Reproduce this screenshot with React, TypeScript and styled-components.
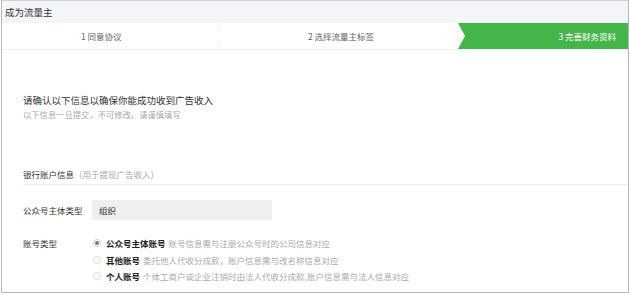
import React from 'react';
import styled, { createGlobalStyle } from 'styled-components';

const GlobalStyle = createGlobalStyle`
  body {
    margin: 0;
    background: #fff;
    font-family: "Noto Sans CJK SC", "Noto Sans", sans-serif;
  }
`;

const Frame = styled.div`
  box-sizing: border-box;
  width: 628px;
  height: 293px;
  margin-left: 1px;
  border: 1px solid #b8b8b8;
  border-top-color: #d0d0d0;
  background: #fff;
  overflow: hidden;
`;

const Header = styled.div`
  height: 22px;
  background: #f4f5f9;
  display: flex;
  align-items: center;
  padding-left: 3px;
  font-size: 9.5px;
  color: #333;
`;

const Steps = styled.div`
  display: flex;
  height: 26px;
  border-bottom: 1px solid #f0f0f0;
`;

const Step = styled.div<{ $w: number; $active?: boolean; $pad: number }>`
  position: relative;
  width: ${p => p.$w}px;
  flex: ${p => (p.$active ? '1' : 'none')};
  display: flex;
  align-items: center;
  justify-content: ${p => (p.$active ? 'flex-end' : 'flex-start')};
  padding: 0 ${p => (p.$active ? p.$pad : 0)}px 0 ${p => (p.$active ? 0 : p.$pad)}px;
  box-sizing: border-box;
  font-size: 8.5px;
  color: ${p => (p.$active ? '#fff' : '#666')};
  background: ${p => (p.$active ? '#44b549' : '#fff')};
  clip-path: ${p =>
    p.$active ? 'polygon(0 0, 100% 0, 100% 100%, 0 100%, 7px 50%)' : 'none'};
`;

const Chevron = styled.svg`
  position: absolute;
  right: -4px;
  top: 0;
`;

const Content = styled.div`
  padding: 43px 0 0 21px;
`;

const Title = styled.div`
  font-size: 9.5px;
  line-height: 14px;
  color: #333;
`;

const Sub = styled.div`
  font-size: 8.3px;
  line-height: 14px;
  color: #aaa;
`;

const Section = styled.div`
  margin-top: 46px;
  padding-bottom: 3px;
  border-bottom: 1px solid #eee;
  font-size: 8.5px;
  line-height: 14px;
  color: #333;
`;

const Hint = styled.span`
  color: #aaa;
`;

const Row = styled.div<{ $top: number; $align?: string }>`
  display: flex;
  align-items: ${p => p.$align || 'center'};
  margin-top: ${p => p.$top}px;
`;

const Label = styled.div`
  width: 69px;
  flex: none;
  font-size: 8.5px;
  line-height: 14px;
  color: #333;
`;

const ReadonlyInput = styled.div`
  width: 180px;
  height: 20px;
  background: #efefef;
  display: flex;
  align-items: center;
  padding-left: 7px;
  box-sizing: border-box;
  font-size: 8.5px;
  color: #333;
`;

const Options = styled.div`
  display: flex;
  flex-direction: column;
  gap: 2.5px;
  padding-left: 1px;
`;

const Option = styled.div`
  display: flex;
  align-items: center;
  height: 14px;
  font-size: 8.5px;
  color: #aaa;
  white-space: nowrap;
`;

const Radio = styled.span<{ $checked?: boolean }>`
  width: 8px;
  height: 8px;
  box-sizing: border-box;
  border-radius: 50%;
  border: 1px solid ${p => (p.$checked ? '#ccc' : '#ddd')};
  margin-right: 5px;
  display: flex;
  align-items: center;
  justify-content: center;
  &::after {
    content: '';
    width: 4px;
    height: 4px;
    border-radius: 50%;
    background: ${p => (p.$checked ? '#777' : 'transparent')};
  }
`;

const Strong = styled.span`
  color: #222;
  font-weight: bold;
  margin-right: 3px;
`;

const options = [
  { name: '公众号主体账号', desc: '账号信息需与注册公众号时的公司信息对应', checked: true },
  { name: '其他账号', desc: '委托他人代收分成款，账户信息需与改名称信息对应' },
  { name: '个人账号', desc: '个体工商户或企业注销时由法人代收分成款,账户信息需与法人信息对应' },
];

export default function App() {
  return (
    <>
      <GlobalStyle />
      <Frame>
        <Header>成为流量主</Header>
        <Steps>
          <Step $w={219} $pad={79}>
            1 同意协议
            <Chevron width="8" height="26" viewBox="0 0 8 26">
              <polyline points="1,0 7,13 1,26" fill="none" stroke="#ededed" strokeWidth="1" />
            </Chevron>
          </Step>
          <Step $w={237} $pad={87}>
            2 选择流量主标签
          </Step>
          <Step $w={170} $pad={12} $active>
            3 完善财务资料
          </Step>
        </Steps>
        <Content>
          <Title>请确认以下信息以确保你能成功收到广告收入</Title>
          <Sub>以下信息一旦提交，不可修改。请谨慎填写</Sub>
          <Section>
            银行账户信息<Hint>（用于提现广告收入）</Hint>
          </Section>
          <Row $top={15}>
            <Label>公众号主体类型</Label>
            <ReadonlyInput>组织</ReadonlyInput>
          </Row>
          <Row $top={16} $align="flex-start">
            <Label>账号类型</Label>
            <Options>
              {options.map(o => (
                <Option key={o.name}>
                  <Radio $checked={o.checked} />
                  <Strong>{o.name}</Strong>
                  {o.desc}
                </Option>
              ))}
            </Options>
          </Row>
        </Content>
      </Frame>
    </>
  );
}
